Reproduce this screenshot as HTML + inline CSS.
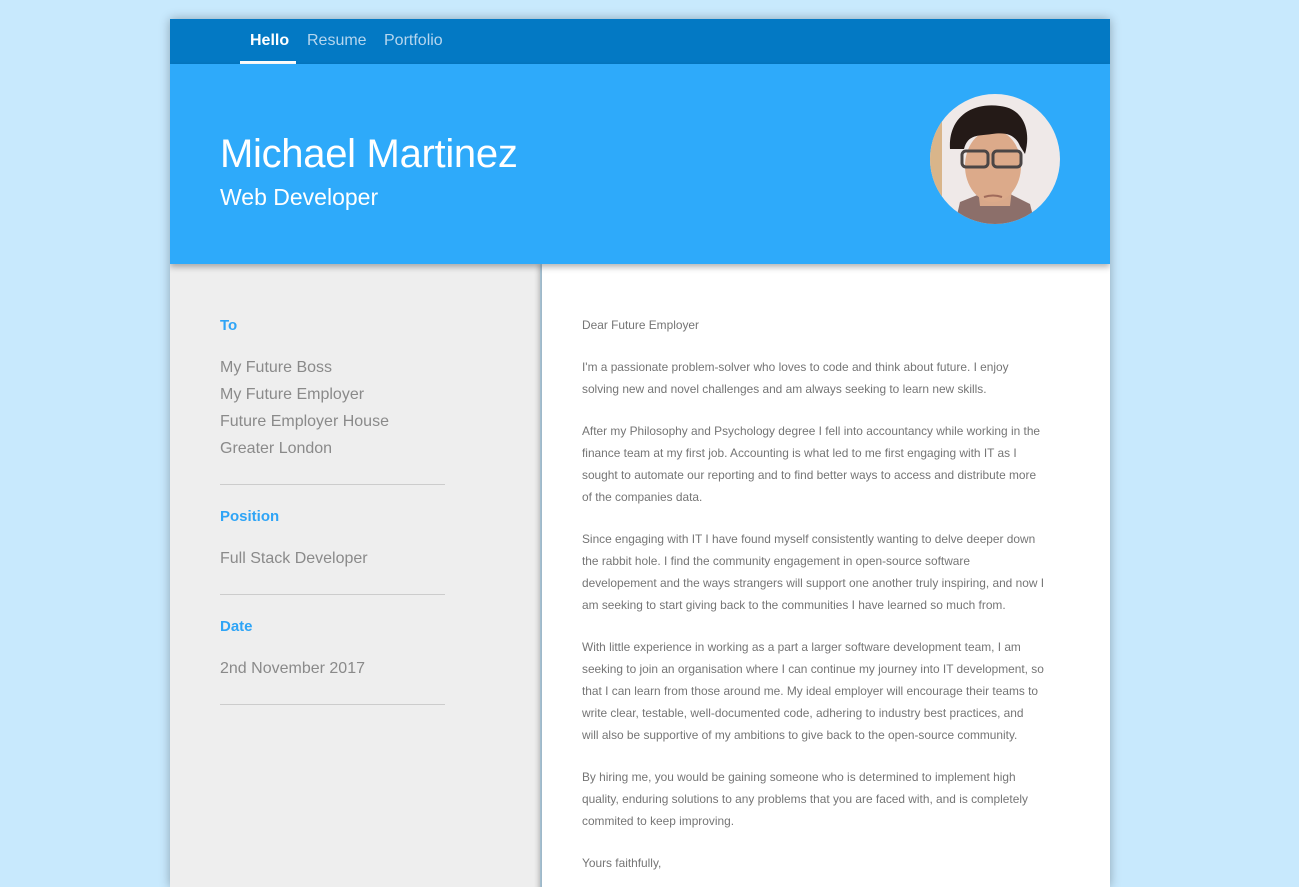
<!DOCTYPE html>
<html><head><meta charset="utf-8"><style>
*{margin:0;padding:0;box-sizing:border-box}
html,body{width:1299px;height:887px;overflow:hidden}
body{background:#c8e9fd;font-family:"Liberation Sans",sans-serif;position:relative}
.card{position:absolute;left:170px;top:19px;width:940px;height:868px;box-shadow:0 0 10px rgba(0,0,0,.3);overflow:hidden}
.nav{height:45px;background:#0379c4;position:relative}
.nav a{position:absolute;top:13px;font-size:16px;color:#b5d6ef;text-decoration:none}
.nav .act{color:#fff;font-weight:bold}
.ul{position:absolute;left:70px;top:42px;width:56px;height:3px;background:#fff}
.hdr{height:200px;background:#2eaafa;position:relative;z-index:2;box-shadow:0 3px 6px rgba(0,0,0,.3)}
.hdr h1{position:absolute;left:50px;top:68px;font-weight:300;font-size:40px;color:#fff;letter-spacing:-.3px}
.hdr h2{position:absolute;left:50px;top:120px;font-weight:300;font-size:23px;color:#fff}
.left{position:absolute;left:0;top:245px;width:370px;height:660px;background:#eee}
.main{position:absolute;left:372px;top:245px;width:568px;height:660px;background:#fff;box-shadow:-3px 0 5px rgba(0,0,0,.25)}
.lh{position:absolute;left:50px;color:#2ea4f6;font-weight:bold;font-size:15px}
.lt{position:absolute;left:50px;color:#8a8a8a;font-size:16px;line-height:27px}
.hr{position:absolute;left:50px;width:225px;height:1px;background:#ccc}
.letter{position:absolute;left:40px;top:50px;font-size:11.9px;line-height:22px;color:#757575;white-space:nowrap}
.letter p{margin-bottom:20px}
</style></head><body>
<div class="card">
<div class="nav"><a class="act" style="left:80px">Hello</a><a style="left:137px">Resume</a><a style="left:214px">Portfolio</a><div class="ul"></div></div>
<div class="hdr"><h1>Michael Martinez</h1><h2>Web Developer</h2>
<svg style="position:absolute;left:760px;top:30px" width="130" height="130" viewBox="0 0 130 130">
<defs><clipPath id="c"><circle cx="65" cy="65" r="65"/></clipPath></defs>
<g clip-path="url(#c)">
<rect width="130" height="130" fill="#efe9e8"/>
<rect x="0" y="0" width="12" height="130" fill="#d9b58a"/>
<path d="M25 130 L30 108 L50 100 L80 100 L100 110 L105 130Z" fill="#8c6f6a"/>
<path d="M48 95 L82 95 L80 112 L50 112Z" fill="#d8a88a"/>
<ellipse cx="63" cy="72" rx="28" ry="36" fill="#dcaa8a"/>
<path d="M20 55 C18 25 40 8 70 12 C92 14 102 35 95 60 L90 52 C85 40 75 38 62 40 C48 42 38 40 34 55Z" fill="#241a17"/>
<rect x="32" y="57" width="26" height="16" rx="4" fill="none" stroke="#4a4545" stroke-width="3"/>
<rect x="63" y="57" width="28" height="16" rx="4" fill="none" stroke="#4a4545" stroke-width="3"/>
<path d="M54 103 Q63 100 72 103" stroke="#a06a5a" stroke-width="2" fill="none"/>
</g></svg>
</div>
<div class="left">
<div class="lh" style="top:53px">To</div>
<div class="lt" style="top:90px">My Future Boss<br>My Future Employer<br>Future Employer House<br>Greater London</div>
<div class="hr" style="top:220px"></div>
<div class="lh" style="top:244px">Position</div>
<div class="lt" style="top:281px">Full Stack Developer</div>
<div class="hr" style="top:330px"></div>
<div class="lh" style="top:354px">Date</div>
<div class="lt" style="top:391px">2nd November 2017</div>
<div class="hr" style="top:440px"></div>
</div>
<div class="main"><div class="letter">
<p>Dear Future Employer</p>
<p>I'm a passionate problem-solver who loves to code and think about future. I enjoy<br>solving new and novel challenges and am always seeking to learn new skills.</p>
<p>After my Philosophy and Psychology degree I fell into accountancy while working in the<br>finance team at my first job. Accounting is what led to me first engaging with IT as I<br>sought to automate our reporting and to find better ways to access and distribute more<br>of the companies data.</p>
<p>Since engaging with IT I have found myself consistently wanting to delve deeper down<br>the rabbit hole. I find the community engagement in open-source software<br>developement and the ways strangers will support one another truly inspiring, and now I<br>am seeking to start giving back to the communities I have learned so much from.</p>
<p>With little experience in working as a part a larger software development team, I am<br>seeking to join an organisation where I can continue my journey into IT development, so<br>that I can learn from those around me. My ideal employer will encourage their teams to<br>write clear, testable, well-documented code, adhering to industry best practices, and<br>will also be supportive of my ambitions to give back to the open-source community.</p>
<p>By hiring me, you would be gaining someone who is determined to implement high<br>quality, enduring solutions to any problems that you are faced with, and is completely<br>commited to keep improving.</p>
<p>Yours faithfully,</p>
</div></div>
</div>
</body></html>
